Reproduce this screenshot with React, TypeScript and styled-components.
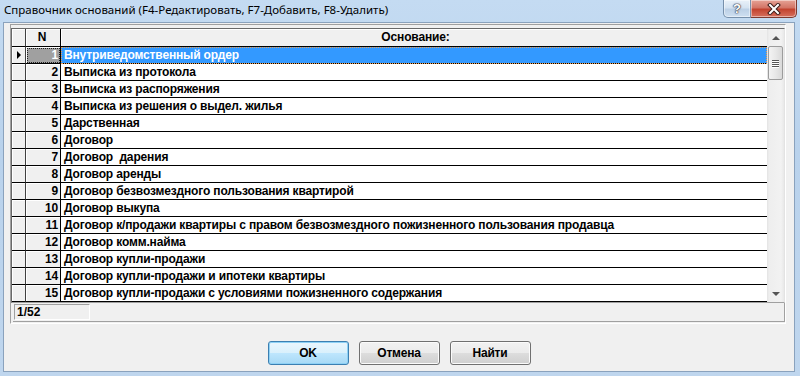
import React from "react";
import styled, { createGlobalStyle } from "styled-components";

const GlobalStyle = createGlobalStyle`
  html, body {
    margin: 0;
    padding: 0;
    background: #ffffff;
  }
  body {
    width: 800px;
    height: 376px;
    overflow: hidden;
    font-family: "Liberation Sans", Arial, sans-serif;
  }
`;

const Frame = styled.div`
  width: 800px;
  height: 376px;
  box-sizing: border-box;
  display: flex;
  flex-direction: column;
  padding: 0 5px 4px 3px;
  background: linear-gradient(180deg, #c4dbf2 0%, #b9d2ec 40%, #bfd6ee 100%);
`;

const TitleBar = styled.div`
  height: 22px;
  display: flex;
  align-items: flex-start;
  justify-content: space-between;
  flex-shrink: 0;
`;

const Title = styled.div`
  font-family: "Noto Sans", "Open Sans", sans-serif;
  font-size: 11.5px;
  line-height: 18px;
  color: #000;
  padding: 1px 0 0 1px;
`;

const Controls = styled.div`
  display: flex;
  margin-right: -2px;
`;

const CtlButton = styled.div<{ $close?: boolean }>`
  height: 18px;
  box-sizing: border-box;
  width: ${(p) => (p.$close ? "46px" : "28px")};
  display: flex;
  align-items: center;
  justify-content: center;
  border: 1px solid ${(p) => (p.$close ? "#7d3a30" : "#7790ab")};
  border-top: none;
  border-left-width: ${(p) => (p.$close ? "0" : "1px")};
  border-radius: ${(p) => (p.$close ? "0 0 5px 0" : "0 0 0 5px")};
  background: ${(p) =>
    p.$close
      ? "linear-gradient(180deg, #e6a396 0%, #d37566 45%, #c2432f 55%, #d6705e 100%)"
      : "linear-gradient(180deg, #e9f1f9 0%, #d5e3f1 45%, #bcd0e6 55%, #cfe0f1 100%)"};
  box-shadow: inset 0 0 0 1px rgba(255, 255, 255, 0.45);
  color: #fff;
  font-family: "Liberation Sans", Arial, sans-serif;
  font-weight: bold;
  font-size: 13px;
  text-shadow: 0 0 1px #334, 0 0 1px #334, 0 0 2px #334;
`;

const Client = styled.div`
  flex: 1;
  background: #f0f0f0;
  border: 1px solid #8aa2bd;
  display: flex;
  flex-direction: column;
  align-items: flex-start;
  padding: 1px 0 0 6px;
`;

const Panel = styled.div`
  width: 776px;
  box-sizing: border-box;
  border-top: 1px solid #a0a0a0;
  border-left: 1px solid #a0a0a0;
  border-right: 1px solid #ffffff;
  border-bottom: 1px solid #ffffff;
  padding: 3px 0 1px 0;
  display: flex;
  flex-direction: column;
`;

const Grid = styled.div`
  display: flex;
  background: #ffffff;
  border-top: 1px solid #696969;
  border-left: 1px solid #696969;
  border-bottom: 1px solid #a0a0a0;
  border-right: 1px solid #e3e3e3;
`;

const Table = styled.div`
  flex: 1;
  display: flex;
  flex-direction: column;
`;

const Row = styled.div<{ $head?: boolean }>`
  display: flex;
  height: ${(p) => (p.$head ? "18px" : "17px")};
  font-size: 12px;
  font-weight: bold;
  letter-spacing: -0.15px;
  color: #000;
`;

const Cell = styled.div`
  box-sizing: border-box;
  border-bottom: 1px solid #000;
  border-right: 1px solid #000;
  line-height: 16px;
  white-space: pre;
  overflow: hidden;
`;

const GrayCell = styled(Cell)<{ $sel?: boolean }>`
  background: ${(p) => (p.$sel ? "#a0a0a0" : "#f0f0f0")};
  box-shadow: inset 1px 1px 0 #ffffff;
`;

const IndCell = styled(GrayCell)`
  width: 14px;
  display: flex;
  align-items: center;
  justify-content: center;
  border-right-color: #404040;
`;

const NumCell = styled(GrayCell)<{ $head?: boolean }>`
  width: 35px;
  text-align: ${(p) => (p.$head ? "center" : "right")};
  padding-right: 2px;
  color: ${(p) => (p.$sel ? "#ffffff" : "#000")};
  outline: ${(p) => (p.$sel ? "1px dotted #202020" : "none")};
  outline-offset: -2px;
  line-height: ${(p) => (p.$head ? "17px" : "16px")};
`;

const TextCell = styled(Cell)<{ $sel?: boolean; $head?: boolean }>`
  flex: 1;
  border-right: none;
  padding-left: 3px;
  background: ${(p) => (p.$head ? "#f0f0f0" : p.$sel ? "#3399ff" : "#ffffff")};
  color: ${(p) => (p.$sel ? "#ffffff" : "#000")};
  text-align: ${(p) => (p.$head ? "center" : "left")};
  outline: ${(p) => (p.$sel ? "1px dotted #f0a050" : "none")};
  outline-offset: -1px;
  box-shadow: ${(p) => (p.$head ? "inset 1px 1px 0 #ffffff" : "none")};
  line-height: ${(p) => (p.$head ? "17px" : "16px")};
`;

const Pointer = styled.span`
  width: 0;
  height: 0;
  border-top: 4px solid transparent;
  border-bottom: 4px solid transparent;
  border-left: 4px solid #000;
`;

const ScrollBar = styled.div`
  width: 17px;
  display: flex;
  flex-direction: column;
  background: linear-gradient(90deg, #e3e3e3 0px, #eeeeee 2px, #f2f2f2 14px, #e8e8e8 17px);
`;

const ArrowBtn = styled.div`
  height: 17px;
  display: flex;
  align-items: center;
  justify-content: center;
`;

const Arrow = styled.span<{ $down?: boolean }>`
  width: 0;
  height: 0;
  border-left: 4px solid transparent;
  border-right: 4px solid transparent;
  ${(p) => (p.$down ? "border-top: 4px solid #555;" : "border-bottom: 4px solid #555;")}
`;

const Thumb = styled.div`
  margin: 0 1px;
  height: 34px;
  box-sizing: border-box;
  border: 1px solid #9c9c9c;
  border-radius: 2px;
  background: linear-gradient(90deg, #f3f3f3 0%, #e8e8e8 50%, #d9d9d9 100%);
  display: flex;
  flex-direction: column;
  align-items: center;
  justify-content: center;
  gap: 1px;
`;

const Grip = styled.span`
  width: 7px;
  height: 1px;
  background: #555;
  box-shadow: 0 1px 0 #fff;
`;

const Track = styled.div`
  flex: 1;
`;

const StatusBar = styled.div`
  margin-left: 2px;
  height: 19px;
  box-sizing: border-box;
  border-right: 1px solid #a0a0a0;
  border-bottom: 1px solid #a0a0a0;
  padding: 1px 0 0 1px;
`;

const Counter = styled.div`
  width: 76px;
  height: 16px;
  box-sizing: border-box;
  border-top: 1px solid #a0a0a0;
  border-left: 1px solid #a0a0a0;
  border-right: 1px solid #ffffff;
  border-bottom: 1px solid #ffffff;
  font-size: 12px;
  font-weight: bold;
  line-height: 14px;
  padding-left: 2px;
`;

const ButtonRow = styled.div`
  align-self: stretch;
  display: flex;
  justify-content: center;
  gap: 10px;
  margin: 17px 0 0 -6px;
`;

const DlgButton = styled.div<{ $default?: boolean }>`
  width: 81px;
  height: 24px;
  box-sizing: border-box;
  border: 1px solid ${(p) => (p.$default ? "#3c7fb1" : "#707070")};
  border-radius: 3px;
  display: flex;
  align-items: center;
  justify-content: center;
  font-size: 12px;
  font-weight: bold;
  letter-spacing: -0.2px;
  color: #000;
  background: ${(p) =>
    p.$default
      ? "linear-gradient(180deg, #eaf6fd 0%, #d9f0fc 50%, #bee6fd 51%, #a7d9f5 100%)"
      : "linear-gradient(180deg, #f2f2f2 0%, #ebebeb 50%, #dddddd 51%, #cfcfcf 100%)"};
  box-shadow: inset 0 0 0 1px ${(p) => (p.$default ? "#8ed1f5" : "#fbfbfb")};
`;

const rows = [
  "Внутриведомственный ордер",
  "Выписка из протокола",
  "Выписка из распоряжения",
  "Выписка из решения о выдел. жилья",
  "Дарственная",
  "Договор",
  "Договор  дарения",
  "Договор аренды",
  "Договор безвозмездного пользования квартирой",
  "Договор выкупа",
  "Договор к/продажи квартиры с правом безвозмездного пожизненного пользования продавца",
  "Договор комм.найма",
  "Договор купли-продажи",
  "Договор купли-продажи и ипотеки квартиры",
  "Договор купли-продажи с условиями пожизненного содержания",
];

const CloseIcon = () => (
  <svg width="14" height="12" viewBox="0 0 14 12">
    <path d="M3 2 L11 10 M11 2 L3 10" stroke="#3b1d1a" strokeWidth="4" strokeLinecap="square" />
    <path d="M3 2 L11 10 M11 2 L3 10" stroke="#ffffff" strokeWidth="2" strokeLinecap="square" />
  </svg>
);

const App: React.FC = () => {
  return (
    <Frame>
      <GlobalStyle />
      <TitleBar>
        <Title>Справочник оснований (F4-Редактировать, F7-Добавить, F8-Удалить)</Title>
        <Controls>
          <CtlButton>?</CtlButton>
          <CtlButton $close>
            <CloseIcon />
          </CtlButton>
        </Controls>
      </TitleBar>
      <Client>
        <Panel>
          <Grid>
            <Table>
              <Row $head>
                <IndCell />
                <NumCell $head>N</NumCell>
                <TextCell $head>Основание:</TextCell>
              </Row>
              {rows.map((name, i) => (
                <Row key={i}>
                  <IndCell>{i === 0 && <Pointer />}</IndCell>
                  <NumCell $sel={i === 0}>{i + 1}</NumCell>
                  <TextCell $sel={i === 0}>{name}</TextCell>
                </Row>
              ))}
            </Table>
            <ScrollBar>
              <ArrowBtn>
                <Arrow />
              </ArrowBtn>
              <Thumb>
                <Grip />
                <Grip />
                <Grip />
                <Grip />
              </Thumb>
              <Track />
              <ArrowBtn>
                <Arrow $down />
              </ArrowBtn>
            </ScrollBar>
          </Grid>
          <StatusBar>
            <Counter>1/52</Counter>
          </StatusBar>
        </Panel>
        <ButtonRow>
          <DlgButton $default>OK</DlgButton>
          <DlgButton>Отмена</DlgButton>
          <DlgButton>Найти</DlgButton>
        </ButtonRow>
      </Client>
    </Frame>
  );
};

export default App;
